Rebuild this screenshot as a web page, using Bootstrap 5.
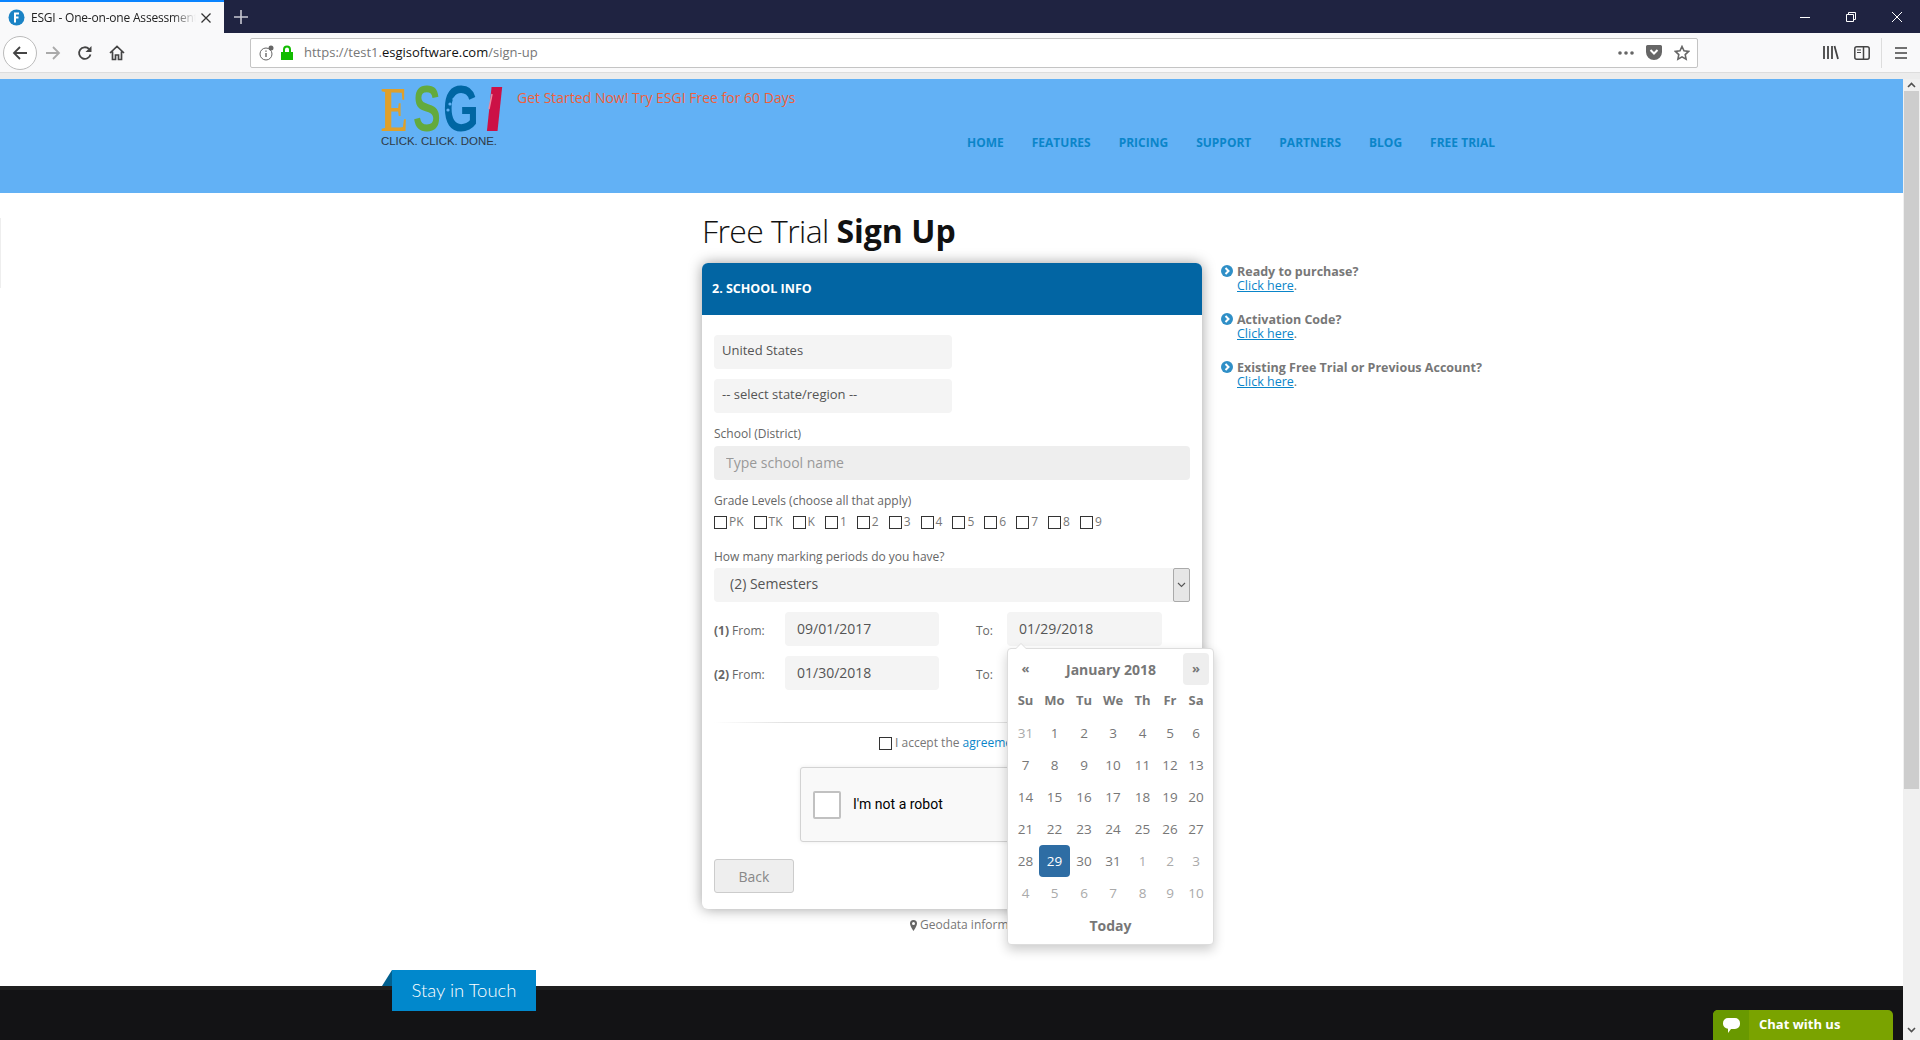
<!DOCTYPE html>
<html lang="en">
<head>
    <meta charset="UTF-8">
    <meta name="viewport" content="width=device-width, initial-scale=1.0">
    <title>ESGI - One-on-one Assessment</title>
    <link href="https://cdn.jsdelivr.net/npm/bootstrap@5.3.0/dist/css/bootstrap.min.css" rel="stylesheet">
    <style>
        html, body { height: 100%; overflow: hidden; }
        body { font-family: "Open Sans", "Liberation Sans", sans-serif; font-size: 13px; color: #666; background: #fff; }

        /* browser chrome */
        .tabbar { height: 33px; background: #1f2341; }
        .tab-active { width: 224px; height: 33px; background: #f9f9fa; border-top: 2px solid #0a84ff; padding: 0 8px; }
        .tab-title { width: 165px; margin-left: 6px; font-size: 12px; letter-spacing: -.2px; color: #222; white-space: nowrap; overflow: hidden; -webkit-mask-image: linear-gradient(90deg, #000 85%, transparent); mask-image: linear-gradient(90deg, #000 85%, transparent); }
        .tab-plus { margin-left: 10px; }
        .win-btns { gap: 36px; padding-right: 18px; }
        .toolbar { height: 40px; background: #f9f9fa; border-bottom: 1px solid #ddd; }
        .tool-icons { width: 250px; padding-left: 3px; }
        .back-ring { width: 34px; height: 34px; border: 1px solid #bbb; border-radius: 50%; background: #fff; }
        .tool-fwd { margin-left: 8px; }
        .tool-reload { margin-left: 16px; }
        .tool-home { margin-left: 16px; }
        .urlbar { width: 1448px; height: 30px; background: #fff; border: 1px solid #c4c4c4; border-radius: 2px; padding: 0 7px 0 8px; font-size: 13px; color: #777; }
        .lock-icon { margin-left: 6px; }
        .url-text { margin-left: 10px; }
        .url-host { color: #111; }
        .url-end { margin-left: auto; gap: 12px; }
        .tool-right { margin-left: 125px; }
        .side-icon { margin-left: 15px; }
        .tool-sep { width: 1px; height: 30px; background: #ddd; margin: 0 13px 0 11px; }
        .chrome-gap { height: 6px; background: #ececec; }

        /* page + scrollbar */
        .page-wrap { height: 961px; }
        .page-view { width: 1903px; height: 961px; }
        .scroll-rail { width: 17px; background: #f0f0f0; }
        .scroll-thumb { height: 698px; margin: 0 1px; background: #cdcdcd; }
        .scroll-arrow { height: 12px; }

        .site-head { height: 114px; background: #62b1f5; padding-top: 6px; }
        .head-inner { width: 1140px; margin-left: 381px; }
        .brand-logo { overflow: visible; flex: none; }
        .tagline { margin-top: 3px; font-size: 14px; line-height: 20px; color: #f0603a; }
        .head-right { margin-left: 17px; }
        .site-nav { margin: 26px 0 0 450px; gap: 28px; line-height: 18px; }
        .site-nav a { font-size: 12px; font-weight: 700; color: #0a85c9; text-decoration: none; text-transform: uppercase; }

        .page-main { position: relative; padding: 18px 0 0 702px; gap: 19px; }
        .edge-sliver { position: absolute; left: 0; top: 25px; width: 1px; height: 70px; background: #eee; }
        .form-col { width: 500px; }
        .page-title { font-size: 32px; font-weight: 300; line-height: 40px; color: #111; margin: 0 0 12px; letter-spacing: -.6px; }
        .page-title b { font-weight: 700; letter-spacing: 0; }
        .form-panel { position: relative; height: 646px; border: 0; border-radius: 6px; box-shadow: 0 0 14px rgba(0,0,0,.38); }
        .form-panel .card-header { height: 52px; padding: 0 10px; background: #0265a3; border: 0; border-radius: 6px 6px 0 0; color: #fff; font-size: 12.5px; font-weight: 700; line-height: 52px; }
        .form-panel .card-body { padding: 20px 12px 0; }

        .soft-field { height: 34px; padding: 0 8px 2px; background-color: #f4f4f4; border: 0; border-radius: 4px; font-size: 13px; color: #555; box-shadow: none; }
        .short-field { width: 238px; }
        .gap-10 { margin-top: 10px; }
        .field-label { display: block; margin: 12px 0 3px; font-size: 12px; line-height: 18px; color: #666; }
        .school-field { background-color: #eee; padding-left: 12px; font-size: 14px; }
        .school-field::placeholder { color: #999; opacity: 1; }
        .grades { gap: 10px; line-height: 18px; font-size: 12px; color: #777; }
        .grades label { display: flex; align-items: center; gap: 2px; }
        .plain-check { width: 13px; height: 13px; margin: 0; appearance: none; background: #fff; border: 1px solid #333; flex: none; }
        .periods-label { margin-top: 17px; margin-bottom: 2px; }
        .period-select { position: relative; }
        .period-select select { padding-left: 16px; padding-bottom: 3px; font-size: 14px; appearance: none; width: 100%; }
        .select-caret { position: absolute; top: 0; right: 0; width: 17px; height: 34px; background: #e6e6e6; border: 1px solid #aaa; border-radius: 2px; }
        .date-row { margin-top: 10px; }
        .date-row .soft-field { padding-left: 12px; font-size: 14px; }
        .from-label { width: 71px; padding-top: 3px; font-size: 12px; color: #666; }
        .from-field { width: 154px; }
        .to-label { width: 31px; margin-left: 37px; padding-top: 3px; font-size: 12px; color: #666; }
        .to-field { width: 155px; }
        .fade-rule { height: 1px; margin: 32px 0 0; background: linear-gradient(90deg, transparent, #e2e2e2 15%); }
        .accept-row { margin: 11px 0 0 165px; gap: 3px; font-size: 12px; line-height: 18px; color: #777; white-space: nowrap; }
        .accept-row a, .side-item a { color: #0a85c9; }
        .accept-row a { text-decoration: none; }
        .robot-box { width: 302px; height: 75px; margin: 15px 0 0 86px; padding-left: 12px; gap: 12px; background: #f9f9f9; border: 1px solid #d3d3d3; border-radius: 3px; box-shadow: 0 0 4px rgba(0,0,0,.08); font-family: Roboto, "Liberation Sans", sans-serif; font-size: 14px; color: #000; }
        .robot-check { width: 28px; height: 28px; background: #fff; border: 2px solid #c1c1c1; border-radius: 2px; }
        .back-btn { width: 80px; height: 34px; margin-top: 17px; padding: 0; background: #eee; border: 1px solid #ccc; border-radius: 3px; color: #888; font-size: 14px; }
        .geo-line { margin: 10px 0 0 208px; font-size: 12px; line-height: 12px; white-space: nowrap; color: #777; }

        .date-pop { position: absolute; left: 305px; top: 385px; width: 207px; height: 297px; padding: 4px; background: #fff; border: 1px solid #ddd; border-radius: 4px; box-shadow: 0 5px 12px rgba(0,0,0,.2); z-index: 5; }
        .date-pop::before { content: ""; position: absolute; left: 7px; top: -6px; border: solid transparent; border-width: 0 6px 6px; border-bottom-color: #ddd; }
        .date-pop::after { content: ""; position: absolute; left: 8px; top: -5px; border: solid transparent; border-width: 0 5px 5px; border-bottom-color: #fff; }
        .dp-grid { width: 197px; table-layout: fixed; font-size: 13.5px; color: #777; }
        .dp-grid th, .dp-grid td { height: 32px; padding: 0; text-align: center; font-weight: 400; }
        .dp-grid th { font-weight: 700; font-size: 13px; }
        .dp-grid .dp-title { font-size: 14px; }
        .dp-grid .dp-old { color: #aaa; }
        .dp-grid .dp-active { background: #2e6da4; color: #fff; border-radius: 4px; }
        .dp-grid .dp-next { background: #eee; border-radius: 4px; }

        .side-col { padding-top: 54px; width: 300px; }
        .side-item { gap: 4px; margin-bottom: 20px; font-size: 12.5px; line-height: 14px; color: #777; }
        .side-item svg { flex: none; }
        .side-item b { color: #777; }

        .site-foot { position: relative; height: 54px; background: #131315; border-top: 4px solid #1f1f1f; }
        .touch-tab { position: absolute; left: 392px; top: -20px; width: 144px; height: 41px; background: #0188cc; color: #fff; font-family: Lato, sans-serif; font-weight: 300; font-size: 18.5px; line-height: 41px; text-align: center; }
        .touch-tab::before { content: ""; position: absolute; left: -10px; top: 0; border-style: solid; border-width: 0 0 16px 10px; border-color: transparent transparent #01608f transparent; }
        .chat-tab { position: absolute; right: 10px; bottom: 0; width: 180px; height: 30px; background: #7aa300; border-radius: 5px 5px 0 0; color: #fff; font-size: 13px; font-weight: 700; overflow: hidden; }
        .chat-icon { width: 36px; height: 30px; background: #699900; }
        .chat-text { margin-left: 10px; }
    </style>
</head>
<body>
    <div class="tabbar d-flex align-items-center">
        <div class="tab-active d-flex align-items-center">
            <svg width="17" height="17" viewBox="0 0 17 17"><circle cx="8.5" cy="8.5" r="8" fill="#1b83c5"/><path d="M6 3.5h5v2H8v2h2.5v2H8v4H6z" fill="#fff"/></svg>
            <div class="tab-title">ESGI - One-on-one Assessment</div>
            <svg width="12" height="12" viewBox="0 0 12 12" class="ms-auto me-1"><path d="M1.5 1.5l9 9M10.5 1.5l-9 9" stroke="#333" stroke-width="1.3"/></svg>
        </div>
        <svg class="tab-plus" width="14" height="14" viewBox="0 0 14 14"><path d="M7 0v14M0 7h14" stroke="#c8c9d2" stroke-width="1.6"/></svg>
        <div class="win-btns d-flex align-items-center ms-auto">
            <svg width="10" height="10" viewBox="0 0 10 10"><path d="M0 5.5h10" stroke="#fff"/></svg>
            <svg width="10" height="10" viewBox="0 0 10 10"><path d="M.5 2.5h7v7h-7zM2.5 2.5v-2h7v7h-2" fill="none" stroke="#fff"/></svg>
            <svg width="10" height="10" viewBox="0 0 10 10"><path d="M0 0l10 10M10 0L0 10" stroke="#fff"/></svg>
        </div>
    </div>
    <div class="toolbar d-flex align-items-center">
        <div class="tool-icons d-flex align-items-center">
            <div class="back-ring d-flex align-items-center justify-content-center">
                <svg width="16" height="16" viewBox="0 0 16 16"><path d="M15 8H2M8 2L2 8l6 6" fill="none" stroke="#444" stroke-width="1.8"/></svg>
            </div>
            <svg class="tool-fwd" width="16" height="16" viewBox="0 0 16 16"><path d="M1 8h13M8 2l6 6-6 6" fill="none" stroke="#aaa" stroke-width="1.8"/></svg>
            <svg class="tool-reload" width="16" height="16" viewBox="0 0 16 16"><path d="M13.5 9.5A5.8 5.8 0 1 1 12 4" fill="none" stroke="#444" stroke-width="1.8"/><path d="M14.5 1v6h-6z" fill="#444"/></svg>
            <svg class="tool-home" width="16" height="16" viewBox="0 0 16 16"><path d="M1 8l7-6.5L15 8M3.5 6.500V14.500h3V10h3v4.500h3V6.500" fill="none" stroke="#444" stroke-width="1.7"/></svg>
        </div>
        <div class="urlbar d-flex align-items-center">
            <svg width="15" height="16" viewBox="0 0 15 16"><circle cx="7" cy="9" r="6" fill="none" stroke="#666"/><path d="M7 8v4M7 5.500v1.200" stroke="#666" stroke-width="1.4"/><circle cx="12" cy="3" r="2.500" fill="#666"/></svg>
            <svg class="lock-icon" width="14" height="16" viewBox="0 0 14 16"><path d="M1 7h12v8H1z" fill="#12bc00"/><path d="M4 7V4.500a3 3 0 0 1 6 0V7" fill="none" stroke="#12bc00" stroke-width="2"/></svg>
            <span class="url-text">https://test1.<span class="url-host">esgisoftware.com</span>/sign-up</span>
            <div class="url-end d-flex align-items-center">
                <svg width="16" height="4" viewBox="0 0 16 4"><circle cx="2" cy="2" r="1.8" fill="#666"/><circle cx="8" cy="2" r="1.8" fill="#666"/><circle cx="14" cy="2" r="1.8" fill="#666"/></svg>
                <svg width="16" height="15" viewBox="0 0 16 15"><path d="M0 1.500A1.500 1.500 0 0 1 1.500 0h13A1.500 1.500 0 0 1 16 1.500V7a8 8 0 0 1-16 0z" fill="#666"/><path d="M4.500 5L8 8.500 11.500 5" fill="none" stroke="#fff" stroke-width="2"/></svg>
                <svg width="16" height="16" viewBox="0 0 16 16"><path d="M8 1.500l2 4.300 4.600.6-3.400 3.200.9 4.600L8 11.900l-4.100 2.300.9-4.600L1.400 6.400 6 5.800z" fill="none" stroke="#666" stroke-width="1.6"/></svg>
            </div>
        </div>
        <div class="tool-right d-flex align-items-center">
            <svg width="16" height="15" viewBox="0 0 16 15"><path d="M1 1v13M5 1v13M9 1v13M11.500 1l3.500 13" fill="none" stroke="#444" stroke-width="1.8"/></svg>
            <svg class="side-icon" width="16" height="14" viewBox="0 0 16 14"><rect x=".8" y=".8" width="14.400" height="12.400" rx="2" fill="none" stroke="#444" stroke-width="1.500"/><path d="M9.500 1v12" stroke="#444" stroke-width="1.500"/><path d="M3 4h4M3 6.500h4" stroke="#444"/></svg>
            <div class="tool-sep"></div>
            <svg width="12" height="12" viewBox="0 0 12 12"><path d="M0 1h12M0 6h12M0 11h12" stroke="#444" stroke-width="1.700"/></svg>
        </div>
    </div>
    <div class="chrome-gap"></div>

    <div class="page-wrap d-flex">
        <div class="page-view d-flex flex-column">
            <header class="site-head">
                <div class="head-inner d-flex">
                    <svg class="brand-logo" width="119" height="66" viewBox="0 0 119 66">
                        <g transform="translate(0,46) scale(.63,1)"><text font-family="Liberation Serif" font-weight="700" font-size="64" fill="#dfa02a">E</text></g>
                        <g transform="translate(32,46) scale(.65,1)"><text font-family="Liberation Sans" font-weight="700" font-size="64" fill="#63aa3d">S</text></g>
                        <g transform="translate(62,46) scale(.72,1)"><text font-family="Liberation Sans" font-weight="700" font-size="64" fill="#0066a3">G</text></g>
                        <g transform="translate(101,46) skewX(-6) scale(1.15,1)"><text font-family="Liberation Sans" font-weight="700" font-size="64" fill="#cc1146">I</text></g>
                        <circle cx="73" cy="14" r="1.600" fill="#62b1f5"/><circle cx="69" cy="19" r="1.600" fill="#62b1f5"/><circle cx="67" cy="25" r="1.600" fill="#62b1f5"/>
                        <path d="M111 9l-3 15" stroke="#e98aa3" stroke-width="1.500"/>
                        <text x="0" y="60" font-family="Liberation Sans" font-size="11.500" fill="#2f3a46" textLength="116">CLICK. CLICK. DONE.</text>
                    </svg>
                    <div class="head-right">
                        <div class="tagline">Get Started Now! Try ESGI Free for 60 Days</div>
                        <nav class="site-nav d-flex">
                            <a href="#">Home</a>
                            <a href="#">Features</a>
                            <a href="#">Pricing</a>
                            <a href="#">Support</a>
                            <a href="#">Partners</a>
                            <a href="#">Blog</a>
                            <a href="#">Free Trial</a>
                        </nav>
                    </div>
                </div>
            </header>

            <main class="page-main d-flex flex-grow-1">
                <div class="edge-sliver"></div>
                <div class="form-col">
                    <h1 class="page-title">Free Trial <b>Sign Up</b></h1>
                    <div class="card form-panel">
                        <div class="card-header">2. SCHOOL INFO</div>
                        <div class="card-body">
                            <select class="form-control soft-field short-field"><option>United States</option></select>
                            <select class="form-control soft-field short-field gap-10"><option>-- select state/region --</option></select>
                            <label class="field-label">School (District)</label>
                            <input class="form-control soft-field school-field" type="text" placeholder="Type school name">
                            <label class="field-label">Grade Levels (choose all that apply)</label>
                            <div class="grades d-flex">
                                <label><input class="plain-check" type="checkbox">PK</label>
                                <label><input class="plain-check" type="checkbox">TK</label>
                                <label><input class="plain-check" type="checkbox">K</label>
                                <label><input class="plain-check" type="checkbox">1</label>
                                <label><input class="plain-check" type="checkbox">2</label>
                                <label><input class="plain-check" type="checkbox">3</label>
                                <label><input class="plain-check" type="checkbox">4</label>
                                <label><input class="plain-check" type="checkbox">5</label>
                                <label><input class="plain-check" type="checkbox">6</label>
                                <label><input class="plain-check" type="checkbox">7</label>
                                <label><input class="plain-check" type="checkbox">8</label>
                                <label><input class="plain-check" type="checkbox">9</label>
                            </div>
                            <label class="field-label periods-label">How many marking periods do you have?</label>
                            <div class="period-select">
                                <select class="form-control soft-field"><option>(2) Semesters</option></select>
                                <div class="select-caret d-flex align-items-center justify-content-center">
                                    <svg width="9" height="6" viewBox="0 0 9 6"><path d="M1 1l3.500 3.500L8 1" fill="none" stroke="#555" stroke-width="1.100"/></svg>
                                </div>
                            </div>
                            <div class="date-row d-flex align-items-center">
                                <span class="from-label"><b>(1)</b> From:</span>
                                <input class="form-control soft-field from-field" type="text" value="09/01/2017">
                                <span class="to-label">To:</span>
                                <input class="form-control soft-field to-field" type="text" value="01/29/2018">
                            </div>
                            <div class="date-row d-flex align-items-center">
                                <span class="from-label"><b>(2)</b> From:</span>
                                <input class="form-control soft-field from-field" type="text" value="01/30/2018">
                                <span class="to-label">To:</span>
                                <input class="form-control soft-field to-field" type="text">
                            </div>
                            <div class="fade-rule"></div>
                            <div class="accept-row d-flex align-items-center">
                                <input class="plain-check" type="checkbox">
                                <span>I accept the <a href="#">agreement</a></span>
                            </div>
                            <div class="robot-box d-flex align-items-center">
                                <div class="robot-check"></div>
                                <span>I'm not a robot</span>
                            </div>
                            <button class="btn back-btn" type="button">Back</button>
                        </div>

                        <!-- datepicker popup, open on the first To field -->
                        <div class="date-pop">
                            <table class="dp-grid">
                                <colgroup>
                                    <col style="width:27px"><col style="width:31px"><col style="width:28px"><col style="width:30px"><col style="width:29px"><col style="width:26px"><col style="width:26px">
                                </colgroup>
                                <thead>
                                    <tr><th>«</th><th colspan="5" class="dp-title">January 2018</th><th class="dp-next">»</th></tr>
                                    <tr><th>Su</th><th>Mo</th><th>Tu</th><th>We</th><th>Th</th><th>Fr</th><th>Sa</th></tr>
                                </thead>
                                <tbody>
                                    <tr><td class="dp-old">31</td><td>1</td><td>2</td><td>3</td><td>4</td><td>5</td><td>6</td></tr>
                                    <tr><td>7</td><td>8</td><td>9</td><td>10</td><td>11</td><td>12</td><td>13</td></tr>
                                    <tr><td>14</td><td>15</td><td>16</td><td>17</td><td>18</td><td>19</td><td>20</td></tr>
                                    <tr><td>21</td><td>22</td><td>23</td><td>24</td><td>25</td><td>26</td><td>27</td></tr>
                                    <tr><td>28</td><td class="dp-active">29</td><td>30</td><td>31</td><td class="dp-old">1</td><td class="dp-old">2</td><td class="dp-old">3</td></tr>
                                    <tr><td class="dp-old">4</td><td class="dp-old">5</td><td class="dp-old">6</td><td class="dp-old">7</td><td class="dp-old">8</td><td class="dp-old">9</td><td class="dp-old">10</td></tr>
                                </tbody>
                                <tfoot>
                                    <tr><th colspan="7" class="dp-title">Today</th></tr>
                                </tfoot>
                            </table>
                        </div>
                    </div>
                    <div class="geo-line">
                        <svg width="7" height="11" viewBox="0 0 7 11"><path d="M3.500 0A3.500 3.500 0 0 0 0 3.500C0 6 3.500 11 3.500 11S7 6 7 3.500A3.500 3.500 0 0 0 3.500 0zm0 5a1.500 1.500 0 1 1 0-3 1.500 1.500 0 0 1 0 3z" fill="#666"/></svg>
                        Geodata information
                    </div>
                </div>
                <aside class="side-col">
                    <div class="side-item d-flex">
                        <svg width="12" height="12" viewBox="0 0 12 12"><circle cx="6" cy="6" r="6" fill="#2f8fc7"/><path d="M4.500 3l3 3-3 3" fill="none" stroke="#fff" stroke-width="2"/></svg>
                        <div><b>Ready to purchase?</b><br><a href="#">Click here</a>.</div>
                    </div>
                    <div class="side-item d-flex">
                        <svg width="12" height="12" viewBox="0 0 12 12"><circle cx="6" cy="6" r="6" fill="#2f8fc7"/><path d="M4.500 3l3 3-3 3" fill="none" stroke="#fff" stroke-width="2"/></svg>
                        <div><b>Activation Code?</b><br><a href="#">Click here</a>.</div>
                    </div>
                    <div class="side-item d-flex">
                        <svg width="12" height="12" viewBox="0 0 12 12"><circle cx="6" cy="6" r="6" fill="#2f8fc7"/><path d="M4.500 3l3 3-3 3" fill="none" stroke="#fff" stroke-width="2"/></svg>
                        <div><b>Existing Free Trial or Previous Account?</b><br><a href="#">Click here</a>.</div>
                    </div>
                </aside>
            </main>

            <footer class="site-foot">
                <div class="touch-tab">Stay in Touch</div>
                <div class="chat-tab d-flex align-items-center">
                    <div class="chat-icon d-flex align-items-center justify-content-center">
                        <svg width="17" height="15" viewBox="0 0 17 15"><path d="M5 0h7a5 5 0 0 1 5 5v1a5 5 0 0 1-5 5H8l-3 4v-4.300A5 5 0 0 1 0 6V5a5 5 0 0 1 5-5z" fill="#fff"/></svg>
                    </div>
                    <span class="chat-text">Chat with us</span>
                </div>
            </footer>
        </div>
        <div class="scroll-rail d-flex flex-column">
            <div class="scroll-arrow d-flex align-items-center justify-content-center">
                <svg width="9" height="6" viewBox="0 0 9 6"><path d="M1 5l3.500-3.500L8 5" fill="none" stroke="#505050" stroke-width="1.600"/></svg>
            </div>
            <div class="scroll-thumb"></div>
            <div class="scroll-arrow d-flex align-items-center justify-content-center mt-auto mb-1">
                <svg width="9" height="6" viewBox="0 0 9 6"><path d="M1 1l3.500 3.500L8 1" fill="none" stroke="#505050" stroke-width="1.600"/></svg>
            </div>
        </div>
    </div>
    <script src="https://cdn.jsdelivr.net/npm/bootstrap@5.3.0/dist/js/bootstrap.bundle.min.js"></script>
</body>
</html>
